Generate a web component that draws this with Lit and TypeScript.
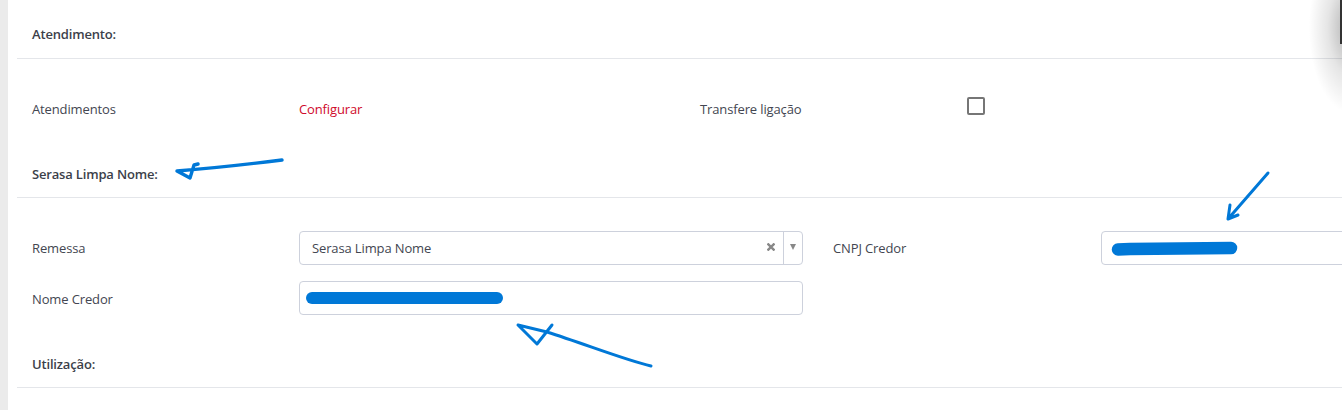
import { LitElement, html, css } from "lit";
import { customElement } from "lit/decorators.js";

@customElement("app-root")
export class AppRoot extends LitElement {
  static styles = css`
    :host {
      display: block;
      position: relative;
      height: 410px;
      overflow: hidden;
      background: #fff;
      font-family: "Open Sans", "Noto Sans", sans-serif;
      font-size: 13px;
      line-height: 20px;
      letter-spacing: -0.13px;
      color: #434651;
    }
    .page {
      display: flex;
      height: 100%;
    }
    .rail {
      flex: 0 0 8px;
      background: #ebebeb;
    }
    .panel {
      flex: 1;
      min-width: 0;
      padding-left: 9px;
    }
    .title {
      padding: 0 0 13px 15px;
      border-bottom: 1px solid #e4e6ea;
      font-weight: 600;
      letter-spacing: -0.17px;
      color: #3c3f4a;
    }
    .t1 { padding-top: 24px; padding-bottom: 14px; }
    .t2 { margin-top: 45px; }
    .t3 { margin-top: 39px; }
    .row {
      display: grid;
      padding-left: 15px;
      align-items: center;
    }
    .r1 {
      grid-template-columns: 267px 401px 268px 1fr;
      margin-top: 40px;
      height: 20px;
    }
    .r2 {
      grid-template-columns: 267px 504px 30px 268px 300px;
      margin-top: 33px;
    }
    .r3 {
      grid-template-columns: 267px 504px;
      margin-top: 16px;
    }
    .low { padding-top: 2px; }
    .link { color: #cf0a2c; }
    .check {
      width: 14px;
      height: 14px;
      margin: -6px 0 0 -1px;
      border: 2px solid #767676;
      border-radius: 2px;
    }
    .field {
      display: flex;
      align-items: center;
      height: 34px;
      box-sizing: border-box;
      padding-left: 12px;
      border: 1px solid #cdd1dc;
      border-radius: 4px;
      background: #fff;
    }
    .value { flex: 1; }
    .clear {
      display: flex;
      justify-content: center;
      width: 24px;
      margin-top: -2px;
    }
    .clear path {
      stroke: #888;
      stroke-width: 2.4;
      fill: none;
    }
    .caret {
      display: flex;
      align-items: center;
      justify-content: center;
      align-self: stretch;
      width: 18px;
      border-left: 1px solid #cdd1dc;
    }
    .caret i {
      width: 0;
      height: 0;
      margin-top: -2px;
      border-left: 3.5px solid transparent;
      border-right: 3.5px solid transparent;
      border-top: 6px solid #888;
    }
    .ink {
      position: absolute;
      inset: 0;
      width: 100%;
      height: 100%;
      pointer-events: none;
    }
    .ink path {
      fill: none;
      stroke: #0078d7;
      stroke-linecap: round;
      stroke-linejoin: round;
    }
    .shade {
      position: absolute;
      top: -40px;
      right: -34px;
      width: 84px;
      height: 170px;
      background: radial-gradient(ellipse 50% 50% at 70% 40%, rgba(0,0,0,.32), rgba(0,0,0,.1) 55%, rgba(0,0,0,0) 100%);
    }
    .edge {
      position: absolute;
      top: 0;
      right: 0;
      width: 2px;
      height: 44px;
      background: #333;
    }
  `;

  render() {
    return html`
      <div class="page">
        <div class="rail"></div>
        <div class="panel">
          <div class="title t1">Atendimento:</div>
          <div class="row r1">
            <span>Atendimentos</span>
            <span class="link">Configurar</span>
            <span>Transfere ligação</span>
            <div class="check"></div>
          </div>
          <div class="title t2">Serasa Limpa Nome:</div>
          <div class="row r2">
            <span>Remessa</span>
            <div class="field">
              <span class="value">Serasa Limpa Nome</span>
              <span class="clear">
                <svg width="8" height="8" viewBox="0 0 8 8"><path d="M0.5 0.500 L7.500 7.500 M7.500 0.500 L0.500 7.500" /></svg>
              </span>
              <span class="caret"><i></i></span>
            </div>
            <span></span>
            <span>CNPJ Credor</span>
            <div class="field"></div>
          </div>
          <div class="row r3">
            <span class="low">Nome Credor</span>
            <div class="field"></div>
          </div>
          <div class="title t3">Utilização:</div>
        </div>
      </div>
      <div class="shade"></div>
      <div class="edge"></div>
      <svg class="ink" viewBox="0 0 1342 410">
        <path stroke-width="3.400" d="M282 160 C250 164 215 168 177 171 L190 178 L194 165 L198 164" />
        <path stroke-width="3" d="M651 366 C625 360 585 344 547 332 L518 325 L537 344 L552 325" />
        <path stroke-width="3" d="M1268 173 L1228 219 M1230 205 L1228 219 L1238 215" />
        <path stroke-width="12.500" d="M1118 249.500 L1130 249 L1231 248" />
        <path stroke-width="12" d="M312 298 H497" />
      </svg>
    `;
  }
}
